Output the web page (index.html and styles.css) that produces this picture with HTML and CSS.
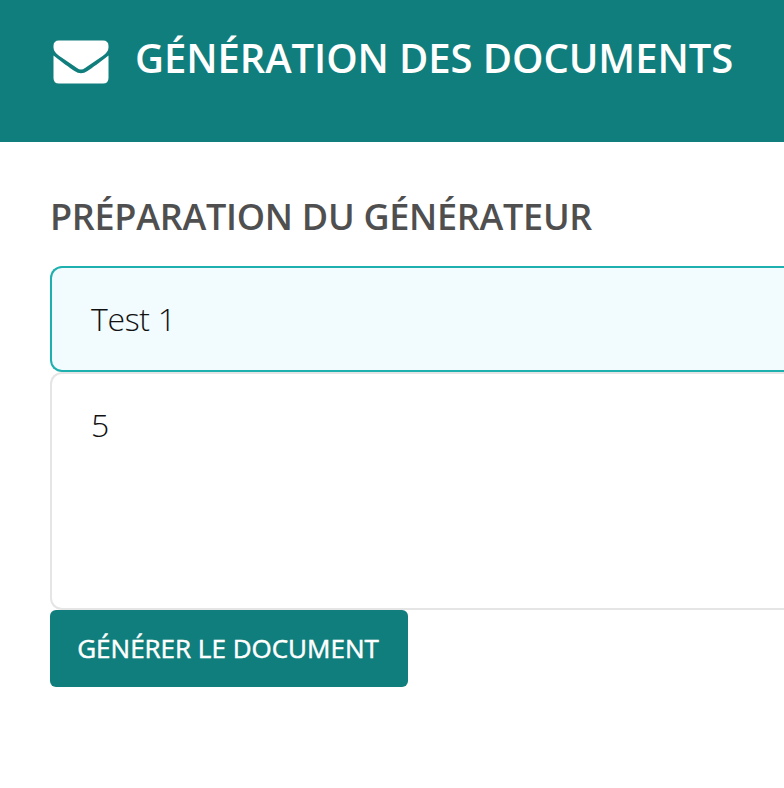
FILE: index.html
```html
<!DOCTYPE html>
<html lang="fr">
<head>
<meta charset="utf-8">
<title>Génération des documents</title>
<link rel="stylesheet" href="styles.css">
</head>
<body>
<header class="banner">
  <svg class="banner-icon" viewBox="0 0 56 44" aria-hidden="true">
    <path d="M6 .5H50Q55.500 .5 55.500 6V7.500C55.500 11 53 13.500 50 15.700L32 28Q28 31 24 28L6 15.700C3 13.500 .5 11 .5 7.500V6Q.5 .5 6 .5Z"/>
    <path d="M.5 15.500C8 21.500 17 28 21.500 31Q28 35.500 34.500 31C39 28 48 21.500 55.500 15.500V38Q55.500 43.500 50 43.500H6Q.5 43.500 .5 38Z"/>
  </svg>
  <h1 class="banner-title">GÉNÉRATION DES DOCUMENTS</h1>
</header>
<main class="content">
  <h2 class="section-title">PRÉPARATION DU GÉNÉRATEUR</h2>
  <form class="form">
    <div class="field field-active">Test 1</div>
    <div class="field field-area">5</div>
    <button class="submit" type="button">GÉNÉRER LE DOCUMENT</button>
  </form>
</main>
</body>
</html>
```
FILE: styles.css
```css
* { box-sizing: border-box; }
body {
  margin: 0;
  background: #fff;
  font-family: "Open Sans", sans-serif;
}
.banner {
  display: flex;
  align-items: flex-start;
  gap: 26px;
  height: 142px;
  padding: 30px 0 0 53px;
  background: #107e7c;
  color: #fff;
}
.banner-icon {
  flex: none;
  width: 56px;
  height: 44px;
  margin-top: 10px;
  fill: currentColor;
}
.banner-title {
  margin: 0;
  font-size: 40px;
  line-height: 55px;
  font-weight: 600;
  letter-spacing: -0.08px;
  white-space: nowrap;
}
.content { padding: 50px 0 0 50px; }
.section-title {
  margin: 0 0 24px;
  color: #4f4f4f;
  font-size: 36px;
  line-height: 50px;
  font-weight: 600;
  letter-spacing: -0.28px;
  white-space: nowrap;
}
.form {
  display: flex;
  flex-direction: column;
  align-items: flex-start;
}
.field {
  width: 100%;
  border: 2px solid #e5e5e5;
  border-right: 0;
  border-radius: 12px 0 0 12px;
  padding: 27px 39px;
  color: #111;
  font-size: 32px;
  line-height: 48px;
  font-weight: 300;
  letter-spacing: -0.3px;
}
.field-active {
  height: 106px;
  border-color: #1eb0ae;
  background: #f2fbfd;
}
.field-area { height: 238px; }
.submit {
  width: 358px;
  height: 77px;
  padding: 0 2px 2px 0;
  border: 0;
  border-radius: 6px;
  background: #107e7c;
  color: #fff;
  font: 400 26px/36px "Open Sans", sans-serif;
  -webkit-text-stroke: 0.5px currentColor;
  white-space: nowrap;
}
```
